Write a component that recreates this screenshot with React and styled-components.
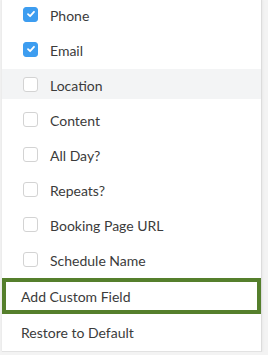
import React from "react";
import styled, { createGlobalStyle } from "styled-components";

const GlobalStyle = createGlobalStyle`
  html, body {
    margin: 0;
    padding: 0;
    background: #f3f3f3;
    overflow: hidden;
  }
  body {
    font-family: Lato, "Liberation Sans", sans-serif;
  }
`;

const Panel = styled.div`
  width: 259px;
  height: 352px;
  margin: -1px 0 0 2px;
  background: #fff;
  border-right: 1px solid #dcdcdc;
  border-bottom: 1px solid #e2e2e2;
  box-shadow: 0 0 3px rgba(0, 0, 0, 0.08);
  display: flex;
  flex-direction: column;
`;

const FieldList = styled.ul`
  list-style: none;
  margin: 0;
  padding: 0;
  display: flex;
  flex-direction: column;
  gap: 5px;
`;

const FieldRow = styled.li`
  height: 30px;
  display: flex;
  align-items: center;
  gap: 12px;
  padding-left: 21px;
  background: ${(p) => (p.$hover ? "#f3f4f5" : "transparent")};
  font-size: 14px;
  color: #3b3b3b;
`;

const Label = styled.span`
  padding-top: 2px;
`;

const Box = styled.span`
  width: 15px;
  height: 15px;
  box-sizing: border-box;
  border-radius: 3px;
  display: flex;
  align-items: center;
  justify-content: center;
  background: ${(p) => (p.$checked ? "#3d9df0" : "#fff")};
  border: 1px solid ${(p) => (p.$checked ? "#3d9df0" : "#d3d3d3")};
`;

const Actions = styled.div`
  margin-top: 4px;
  display: flex;
  flex-direction: column;
`;

const ActionRow = styled.div`
  box-sizing: border-box;
  height: ${(p) => (p.$focused ? "36px" : "37px")};
  display: flex;
  align-items: center;
  padding-left: 15px;
  border: 4px solid ${(p) => (p.$focused ? "#557f2c" : "transparent")};
  font-size: 14px;
  color: #3b3b3b;
`;

const fields = [
  { label: "Phone", checked: true },
  { label: "Email", checked: true },
  { label: "Location", hover: true },
  { label: "Content" },
  { label: "All Day?" },
  { label: "Repeats?" },
  { label: "Booking Page URL" },
  { label: "Schedule Name" },
];

const Check = () => (
  <svg width="10" height="10" viewBox="0 0 10 10" fill="none">
    <path
      d="M2 5.2 L4.1 7.2 L8 2.8"
      stroke="#fff"
      strokeWidth="1.8"
      strokeLinecap="round"
      strokeLinejoin="round"
    />
  </svg>
);

export default function App() {
  return (
    <>
      <GlobalStyle />
      <Panel>
        <FieldList>
          {fields.map((f) => (
            <FieldRow key={f.label} $hover={f.hover}>
              <Box $checked={f.checked}>{f.checked && <Check />}</Box>
              <Label>{f.label}</Label>
            </FieldRow>
          ))}
        </FieldList>
        <Actions>
          <ActionRow $focused>Add Custom Field</ActionRow>
          <ActionRow>Restore to Default</ActionRow>
        </Actions>
      </Panel>
    </>
  );
}
